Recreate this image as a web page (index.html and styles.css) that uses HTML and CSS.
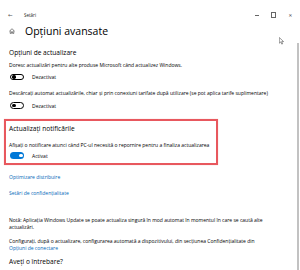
FILE: index.html
```html
<!DOCTYPE html>
<html lang="ro">
<head>
<meta charset="utf-8">
<link rel="stylesheet" href="styles.css">
</head>
<body>
<div class="window">
  <div class="titlebar">
    <span class="back">←</span>
    <span class="app">Setări</span>
    <span class="spacer"></span>
    <span class="ctl min"></span>
    <span class="ctl max"></span>
    <span class="ctl close">✕</span>
  </div>
  <div class="header">
    <svg class="home" viewBox="0 0 10 10" width="6" height="6"><path d="M1 5 L5 1.2 L9 5 M2 4.2 V9 H4 V6.3 H6 V9 H8 V4.2" fill="none" stroke="#222" stroke-width="0.9"/></svg>
    <h1>Opțiuni avansate</h1>
  </div>
  <div class="main">
    <div class="content">
      <h2 class="sec">Opțiuni de actualizare</h2>
      <p class="txt first">Doresc actualizări pentru alte produse Microsoft când actualizez Windows.</p>
      <div class="toggle-row"><span class="toggle off"><span class="knob"></span></span><span class="tlabel">Dezactivat</span></div>
      <p class="txt gap">Descărcați automat actualizările, chiar și prin conexiuni tarifate după utilizare (se pot aplica tarife suplimentare)</p>
      <div class="toggle-row"><span class="toggle off"><span class="knob"></span></span><span class="tlabel">Dezactivat</span></div>
      <div class="box">
        <h2 class="sec boxh">Actualizați notificările</h2>
        <p class="txt boxp">Afișați o notificare atunci când PC-ul necesită o repornire pentru a finaliza actualizarea</p>
        <div class="toggle-row"><span class="toggle on"><span class="knob"></span></span><span class="tlabel">Activat</span></div>
      </div>
      <a class="link l1">Optimizare distribuire</a>
      <a class="link l2">Setări de confidențialitate</a>
      <p class="txt note">Notă: Aplicația Windows Update se poate actualiza singură în mod automat în momentul în care se caută alte actualizări.</p>
      <p class="txt conf">Configurați, după o actualizare, configurarea automată a dispozitivului, din secțiunea Confidențialitate din <a class="link inl">Opțiuni de conectare</a></p>
      <h2 class="sec ask">Aveți o întrebare?</h2>
    </div>
    <div class="scroll"><div class="thumb"></div></div>
  </div>
  <svg class="cursor" viewBox="0 0 8 12" width="5" height="8"><path d="M0.5 0.5 V9.5 L2.8 7.4 L4.4 11 L5.8 10.4 L4.3 6.9 L7.3 6.9 Z" fill="#fff" stroke="#333" stroke-width="0.8"/></svg>
</div>
</body>
</html>
```

FILE: styles.css
```css
* { box-sizing: border-box; }
html, body { margin: 0; padding: 0; background: #fff; }
body {
  font-family: "Open Sans", "Noto Sans", "DejaVu Sans", sans-serif;
  color: #000;
  width: 300px;
  height: 270px;
  overflow: hidden;
}
.window { position: relative; width: 300px; height: 270px; overflow: hidden; }
.titlebar {
  height: 24px;
  padding-top: 6px;
  display: flex;
  align-items: center;
  font-size: 4.5px;
  color: #222;
}
.back { margin-left: 8px; font-size: 5.5px; width: 16px; color: #555; }
.app { font-size: 4.5px; }
.spacer { flex: 1; }
.ctl { width: 17px; display: flex; justify-content: center; align-items: center; color: #555; }
.min::before { content: ""; display: block; width: 4px; height: 0.6px; background: #666; }
.max::before { content: ""; display: block; width: 3.5px; height: 3.5px; border: 0.6px solid #666; }
.close { font-size: 4.5px; margin-right: 1px; }
.header { height: 14px; display: flex; align-items: center; padding-left: 9px; }
.home { margin-right: 10px; }
h1 { margin: 0; font-weight: 400; font-size: 10.5px; line-height: 14px; color: #000; }
.main { display: flex; }
.content { flex: 1; padding-left: 9px; }
.scroll { width: 5px; display: flex; justify-content: center; }
.thumb { margin-top: 5px; width: 2px; height: 230px; background: #c2c2c2; }
.sec { margin: 0; font-weight: 400; font-size: 6.6px; line-height: 9px; }
.content > .sec:first-child { margin-top: 9.5px; }
.txt { margin: 0; font-size: 5px; line-height: 6.5px; }
.first { margin-top: 5.5px; }
.gap { margin-top: 9px; }
.toggle-row { display: flex; align-items: center; height: 7px; margin-top: 5px; }
.txt.gap + .toggle-row { margin-top: 6px; }
.toggle {
  width: 14px; height: 6.5px; border-radius: 4px;
  display: flex; align-items: center; padding: 0 1.3px;
  margin-left: 1px;
}
.toggle.off { border: 0.9px solid #000; }
.toggle.on { background: #0078d7; justify-content: flex-end; }
.knob { width: 3.4px; height: 3.4px; border-radius: 50%; }
.off .knob { background: #000; }
.on .knob { background: #fff; }
.tlabel { font-size: 5px; margin-left: 8px; }
.box {
  margin-top: 10px;
  margin-left: -5px;
  width: 214px;
  height: 46px;
  border: 2px solid #e8585e;
  padding-left: 3px;
  box-shadow: 0 0 1px rgba(232, 88, 94, 0.4);
}
.boxh { margin-top: 3px; }
.boxp { margin-top: 9px; }
.box .toggle-row { margin-top: 3.5px; }
.link { display: block; color: #0067b8; font-size: 5px; line-height: 6.5px; text-decoration: none; }
.l1 { margin-top: 8.5px; }
.l2 { margin-top: 9.5px; }
.note { margin-top: 21px; width: 262px; }
.conf { margin-top: 8px; width: 262px; }
.inl { display: inline; }
.conf .inl::before { content: "\A"; white-space: pre; }
.ask { margin-top: 6px; }
.cursor { position: absolute; left: 279px; top: 37px; }
```
